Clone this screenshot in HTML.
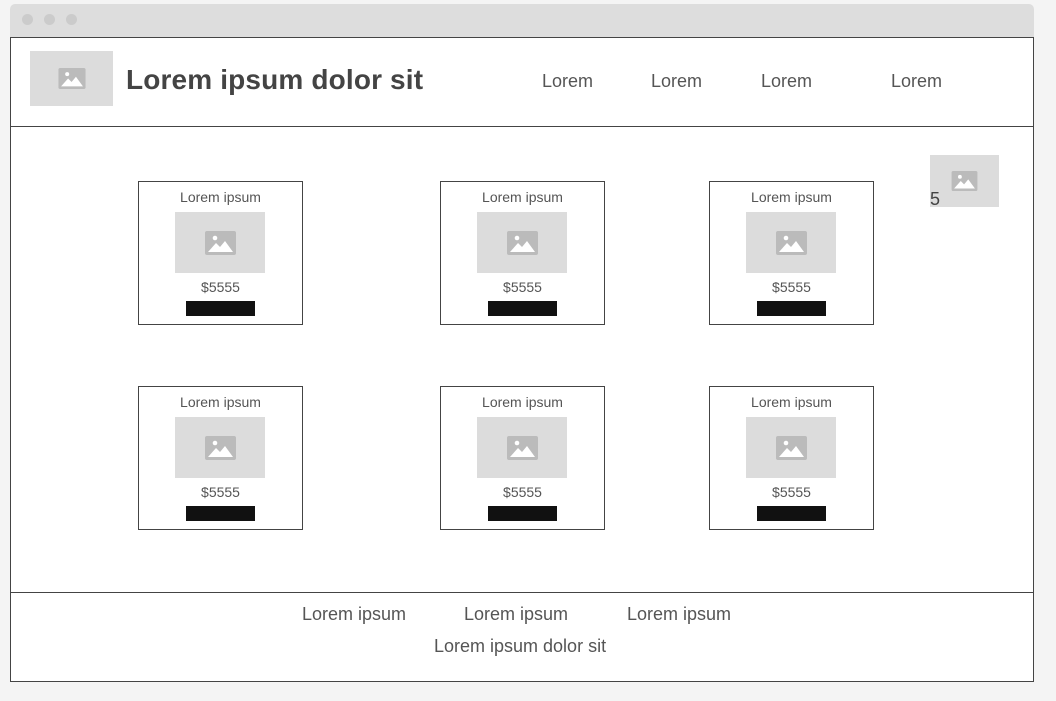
<!DOCTYPE html>
<html><head><style>
*{margin:0;padding:0;box-sizing:border-box}
body{width:1056px;height:701px;background:#f4f4f4;position:relative;overflow:hidden;font-family:"Liberation Sans",sans-serif;color:#444}
.a{position:absolute}
.bar{left:10px;top:4px;width:1024px;height:34px;background:#dddddd;border-radius:5px 5px 0 0}
.dot{width:11px;height:11px;border-radius:50%;background:#cbcbcb;top:14px}
.frame{left:10px;top:37px;width:1024px;height:645px;background:#fff;border:1px solid #444}
.hl{left:10px;width:1024px;height:1px;background:#444}
.img{background:#dcdcdc;display:flex;align-items:center;justify-content:center}
.card{width:165px;height:144px;border:1px solid #444;background:#fff}
.card .t{position:absolute;left:0;width:100%;text-align:center;font-size:14px;color:#555}
.card .im{position:absolute;left:36px;top:30px;width:90px;height:61px}
.card .b{position:absolute;left:47px;top:119px;width:69px;height:15px;background:#111}
.nav{font-size:18px;color:#555;top:71px}
.ft{font-size:18px;color:#555}
</style></head><body>
<div class="a bar"></div>
<div class="a dot" style="left:22px"></div>
<div class="a dot" style="left:44px"></div>
<div class="a dot" style="left:66px"></div>
<div class="a frame"></div>
<div class="a hl" style="top:126px"></div>
<div class="a hl" style="top:592px"></div>

<svg width="0" height="0" style="position:absolute"><defs>
<symbol id="ic" viewBox="0 0 31 24"><rect width="31" height="24" rx="2" fill="#bbb"/><circle cx="10" cy="7" r="2.3" fill="#fff"/><path d="M3 21 L11 12 L15 16 L20 10 L28 21 Z" fill="#fff"/></symbol>
</defs></svg>

<div class="a img" style="left:30px;top:51px;width:83px;height:55px"><svg width="28" height="21"><use href="#ic"/></svg></div>
<div class="a" style="left:126px;top:64px;font-size:28px;font-weight:bold;color:#444;letter-spacing:0.15px">Lorem ipsum dolor sit</div>
<div class="a nav" style="left:542px">Lorem</div>
<div class="a nav" style="left:651px">Lorem</div>
<div class="a nav" style="left:761px">Lorem</div>
<div class="a nav" style="left:891px">Lorem</div>

<div class="a img" style="left:930px;top:155px;width:69px;height:52px"><svg width="27" height="20"><use href="#ic"/></svg></div>
<div class="a" style="left:930px;top:189px;font-size:18px;color:#444">5</div>

<div class="a card" style="left:138px;top:181px"><div class="t" style="top:7px">Lorem ipsum</div><div class="im img"><svg width="31" height="24"><use href="#ic"/></svg></div><div class="t" style="top:97px">$5555</div><div class="b"></div></div>
<div class="a card" style="left:440px;top:181px"><div class="t" style="top:7px">Lorem ipsum</div><div class="im img"><svg width="31" height="24"><use href="#ic"/></svg></div><div class="t" style="top:97px">$5555</div><div class="b"></div></div>
<div class="a card" style="left:709px;top:181px"><div class="t" style="top:7px">Lorem ipsum</div><div class="im img"><svg width="31" height="24"><use href="#ic"/></svg></div><div class="t" style="top:97px">$5555</div><div class="b"></div></div>
<div class="a card" style="left:138px;top:386px"><div class="t" style="top:7px">Lorem ipsum</div><div class="im img"><svg width="31" height="24"><use href="#ic"/></svg></div><div class="t" style="top:97px">$5555</div><div class="b"></div></div>
<div class="a card" style="left:440px;top:386px"><div class="t" style="top:7px">Lorem ipsum</div><div class="im img"><svg width="31" height="24"><use href="#ic"/></svg></div><div class="t" style="top:97px">$5555</div><div class="b"></div></div>
<div class="a card" style="left:709px;top:386px"><div class="t" style="top:7px">Lorem ipsum</div><div class="im img"><svg width="31" height="24"><use href="#ic"/></svg></div><div class="t" style="top:97px">$5555</div><div class="b"></div></div>

<div class="a ft" style="left:302px;top:604px">Lorem ipsum</div>
<div class="a ft" style="left:464px;top:604px">Lorem ipsum</div>
<div class="a ft" style="left:627px;top:604px">Lorem ipsum</div>
<div class="a ft" style="left:434px;top:636px">Lorem ipsum dolor sit</div>
</body></html>
